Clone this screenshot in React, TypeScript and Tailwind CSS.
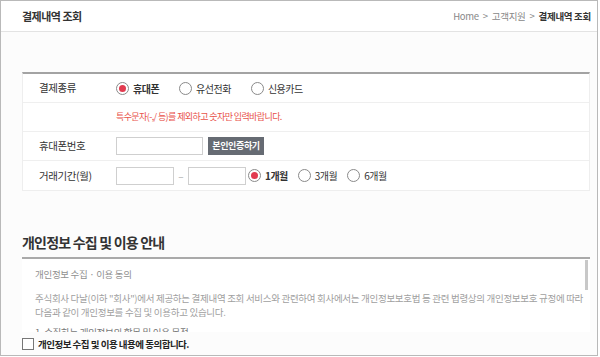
import React from 'react';

const font = { fontFamily: '"Noto Sans CJK KR", "Noto Sans", sans-serif' };

function Radio({ label, checked }: { label: string; checked?: boolean }) {
  return (
    <label className="flex items-center gap-[4px] text-[10px] tracking-[-0.5px] text-[#333]">
      <span className="w-[13px] h-[13px] rounded-full border border-[#8a8a8a] bg-white flex items-center justify-center">
        {checked && <span className="w-[7px] h-[7px] rounded-full bg-[#e23b50]" />}
      </span>
      <span className={checked ? 'font-bold' : ''}>{label}</span>
    </label>
  );
}

function Row({ label, children, last }: { label: string; children?: React.ReactNode; last?: boolean }) {
  return (
    <div className={`flex h-[29px] items-center ${last ? '' : 'border-b border-[#efefef]'}`}>
      <div className="w-[93px] pl-[16px] text-[10.5px] tracking-[-0.4px] text-[#333]">{label}</div>
      <div className="flex items-center">{children}</div>
    </div>
  );
}

export default function App() {
  return (
    <div style={font} className="w-[598px] h-[356px] border border-[#b9b9b9] overflow-hidden bg-[#fcfcfc]">
      <div className="h-[31px] bg-white border-b border-[#e3e3e3] flex items-center justify-between pl-[21px] pr-[6px]">
        <span className="text-[11px] tracking-[-0.5px] font-bold text-[#333]">결제내역 조회</span>
        <div className="flex items-center gap-[4px] text-[9.5px] tracking-[-0.3px] text-[#888]">
          <span>Home</span>
          <span>&gt;</span>
          <span>고객지원</span>
          <span>&gt;</span>
          <span className="font-bold text-[#333]">결제내역 조회</span>
        </div>
      </div>

      <div className="pl-[21px] pt-[40px]">
        <div className="w-[568px] bg-white border-t-2 border-[#a3a3a3] border-x border-x-[#eeeeee] border-b border-b-[#eeeeee]">
          <Row label="결제종류">
            <div className="flex items-center gap-[20px]">
              <Radio label="휴대폰" checked />
              <Radio label="유선전화" />
              <Radio label="신용카드" />
            </div>
          </Row>
          <Row label="">
            <span className="text-[9px] tracking-[-0.6px] text-[#e8524a]">특수문자(-,/ 등)를 제외하고 숫자만 입력바랍니다.</span>
          </Row>
          <Row label="휴대폰번호">
            <div className="w-[87px] h-[18px] border border-[#cfcfcf] bg-white" />
            <button className="ml-[5px] w-[56px] h-[18px] bg-[#666b73] text-white text-[9px] tracking-[-0.4px] font-bold">본인인증하기</button>
          </Row>
          <Row label="거래기간(월)" last>
            <div className="w-[58px] h-[18px] border border-[#cfcfcf] bg-white" />
            <span className="w-[14px] text-center text-[10px] text-[#aaa]">–</span>
            <div className="w-[58px] h-[18px] border border-[#cfcfcf] bg-white" />
            <div className="ml-[2px] flex items-center gap-[10px]">
              <Radio label="1개월" checked />
              <Radio label="3개월" />
              <Radio label="6개월" />
            </div>
          </Row>
        </div>

        <h2 className="mt-[39px] text-[14px] tracking-[-0.8px] font-bold text-[#333] leading-[24px]">개인정보 수집 및 이용 안내</h2>
        <div className="mt-[3px] w-[568px] h-[75px] bg-white border-t-2 border-[#aaaaaa] relative overflow-hidden">
          <div className="pl-[13px] pt-[8px] pr-[6px] text-[9.5px] tracking-[-0.3px] text-[#a0a0a0] leading-[14px]">
            <p className="text-[#8f8f8f]">개인정보 수집 · 이용 동의</p>
            <p className="mt-[10px]">
              주식회사 다날(이하 "회사")에서 제공하는 결제내역 조회 서비스와 관련하여 회사에서는 개인정보보호법 등 관련 법령상의 개인정보보호 규정에 따라 다음과 같이 개인정보를 수집 및 이용하고 있습니다.
            </p>
            <p className="mt-[6px] text-[#777]">1. 수집하는 개인정보의 항목 및 이용 목적</p>
          </div>
          <div className="absolute right-[2px] top-[1px] w-[3px] h-[30px] bg-[#c8c8c8]" />
        </div>

        <label className="mt-[5px] flex items-center gap-[4px] leading-[14px]">
          <span className="w-[12px] h-[12px] border border-[#777] bg-white" />
          <span className="text-[9.5px] tracking-[-0.5px] font-bold text-[#222]">개인정보 수집 및 이용 내용에 동의합니다.</span>
        </label>
      </div>
    </div>
  );
}
